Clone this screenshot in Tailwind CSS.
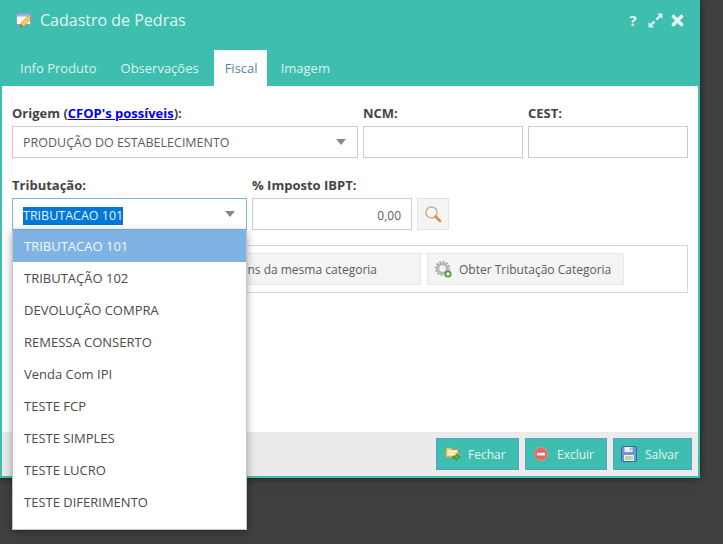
<!DOCTYPE html>
<html><head><meta charset="utf-8"><script src="https://cdn.jsdelivr.net/npm/@tailwindcss/browser@4"></script></head>
<body class="m-0 overflow-hidden">
<div class="relative w-[723px] h-[544px] overflow-hidden font-['Open_Sans',sans-serif] text-[12px] text-[#5c5c5c] bg-[#404040] bg-[repeating-linear-gradient(to_bottom,#404040_0,#404040_32px,#3b3b3b_32px,#3b3b3b_33px)]">
  <div class="relative flex flex-col w-[700px] h-[478px] bg-[#3dbeae] px-[2px] pb-[2px] shadow-[0_0_8px_rgba(0,0,0,0.55)]">
    <div class="h-[50px] shrink-0 flex items-center pl-[14px] pr-[14px] pb-[10px] text-[#e6f7f4]">
      <svg width="17" height="16" viewBox="0 0 17 16" class="shrink-0"><rect x=".5" y="1.5" width="14" height="11" fill="#f7f8fc" stroke="#8f9ac6"/><rect x="1" y="2" width="13" height="2.5" fill="#9fb0e6"/><path d="M4 14.5l1-3.5 7-7 3 3-7 7z" fill="#f7c95c" stroke="#d19a3a" stroke-width=".7"/><path d="M4 15l.8-3 2.2 2.2z" fill="#8a5a35"/></svg>
      <span class="ml-[7px] text-[16px] leading-[20px] text-[#e3f6f2]">Cadastro de Pedras</span>
      <div class="ml-auto flex items-center">
        <span class="font-bold text-[15px] leading-[14px] w-[10px] text-center mr-[10px]">?</span>
        <svg width="15" height="15" viewBox="0 0 15 15" fill="#d9f3ee" class="mr-[8px]"><path d="M9 .5h5.5V6l-1.9-1.9-3.3 3.3-1.7-1.7 3.3-3.3zM6 14.5H.5V9l1.9 1.9 3.3-3.3 1.7 1.7-3.3 3.3z"/></svg>
        <svg width="13" height="13" viewBox="0 0 13 13"><path d="M2.5 2.5l8 8M10.5 2.5l-8 8" stroke="#e3f6f2" stroke-width="3.6" stroke-linecap="round"/></svg>
      </div>
    </div>
    <div class="h-[36px] shrink-0 flex pl-[6px] text-[13px] text-[#d9f3ee]">
      <div class="px-[12px] pt-[9px]">Info Produto</div>
      <div class="pl-[12px] pr-[15px] pt-[9px]">Observações</div>
      <div class="px-[11px] pt-[9px] bg-white text-[#5b84ad] w-[53px]">Fiscal</div>
      <div class="px-[14px] pt-[9px]">Imagem</div>
    </div>
    <div class="flex-1 bg-white pt-[18px] px-[10px] pr-[10px]">
      <div class="flex gap-[5px]">
        <div class="w-[346px]">
          <div class="font-bold text-[13px] leading-[18px] h-[22px] text-[#444] whitespace-nowrap">Origem (<a class="text-[#0000ee] underline font-bold">CFOP's possíveis</a>):</div>
          <div class="h-[32px] border border-[#ccc] flex items-center pl-[10px] pr-[11px] pt-[3px] text-[12.5px]">PRODUÇÃO DO ESTABELECIMENTO<span class="ml-auto mb-[4px] w-0 h-0 border-x-[5px] border-x-transparent border-t-[6px] border-t-[#888]"></span></div>
        </div>
        <div class="w-[160px]">
          <div class="font-bold text-[13px] leading-[18px] h-[22px] text-[#444]">NCM:</div>
          <div class="h-[32px] border border-[#ccc]"></div>
        </div>
        <div class="w-[160px]">
          <div class="font-bold text-[13px] leading-[18px] h-[22px] text-[#444]">CEST:</div>
          <div class="h-[32px] border border-[#ccc]"></div>
        </div>
      </div>
      <div class="flex gap-[5px] mt-[18px]">
        <div class="w-[235px]">
          <div class="font-bold text-[13px] leading-[18px] h-[22px] text-[#444]">Tributação:</div>
          <div class="h-[32px] border border-[#7fb3e3] flex items-center pl-[10px] pr-[11px] pt-[3px] text-[12.5px]"><span class="bg-[#0078d7] text-[#e8f2fb] leading-[18px]">TRIBUTACAO 101</span><span class="ml-auto mb-[4px] w-0 h-0 border-x-[5px] border-x-transparent border-t-[6px] border-t-[#888]"></span></div>
        </div>
        <div class="w-[160px]">
          <div class="font-bold text-[13px] leading-[18px] h-[22px] text-[#444] whitespace-nowrap">% Imposto IBPT:</div>
          <div class="h-[32px] border border-[#ccc] flex items-center justify-end pr-[10px] pt-[3px]">0,00</div>
        </div>
        <div class="pt-[22px]">
          <div class="w-[32px] h-[32px] bg-[#f4f4f4] border border-[#e3e3e3] flex items-center justify-center">
            <svg width="18" height="18" viewBox="0 0 18 18"><circle cx="7.5" cy="7.5" r="5.5" fill="#f3f6f8" stroke="#dba86e" stroke-width="1.4"/><path d="M11.5 11.5l4.5 4.5" stroke="#d0935a" stroke-width="2.6" stroke-linecap="round"/></svg>
          </div>
        </div>
      </div>
      <div class="mt-[15px] h-[48px] border border-[#d8d8d8] flex items-center gap-[6px] pl-[6px] w-[676px]">
        <div class="h-[32px] w-[402px] bg-[#f4f4f4] border border-[#e8e8e8] flex items-center justify-end pr-[43px] pt-[2px] whitespace-nowrap">Copiar para itens da mesma categoria</div>
        <div class="h-[32px] w-[197px] bg-[#f4f4f4] border border-[#e8e8e8] flex items-center pl-[7px] whitespace-nowrap">
          <svg width="17" height="17" viewBox="0 0 17 17" class="mr-[7px] shrink-0"><circle cx="7.5" cy="7.5" r="4.6" fill="none" stroke="#b4b4b4" stroke-width="2.6"/><circle cx="7.5" cy="7.5" r="6.7" fill="none" stroke="#a8a8a8" stroke-width="1.8" stroke-dasharray="2 1.5"/><circle cx="13" cy="13" r="3.5" fill="#4d9a3a"/><path d="M11 13h4M13 11v4" stroke="#fff" stroke-width="1.3"/></svg>
          <span class="pt-[2px]">Obter Tributação Categoria</span>
        </div>
      </div>
    </div>
    <div class="h-[44px] shrink-0 bg-[#ebebeb] flex items-center justify-end gap-[6px] pr-[6px] text-[#e3f6f2]">
      <div class="w-[83px] h-[32px] bg-[#3dbeae] border border-[#5f9bd0] flex items-center pl-[8px]">
        <svg width="16" height="16" viewBox="0 0 16 16" class="mr-[7px] shrink-0"><path d="M1 2h5l1 1.5h6V11H1z" fill="#f6dc8c" stroke="#c59a3c"/><path d="M3 5.5h9M3 8h9" stroke="#fff"/><path d="M8 10h3V7.5l4 3.5-4 3.5V12.5H8z" fill="#6aa83e" stroke="#3f7a22" stroke-width=".7"/></svg>
        <span class="pt-[2px]">Fechar</span>
      </div>
      <div class="w-[82px] h-[32px] bg-[#3dbeae] border border-[#5f9bd0] flex items-center pl-[7px]">
        <svg width="16" height="16" viewBox="0 0 16 16" class="mr-[8px] shrink-0"><circle cx="8" cy="8" r="6.5" fill="#e8645c" stroke="#d9928c"/><rect x="4" y="6.8" width="8" height="2.6" fill="#fff"/></svg>
        <span class="pt-[2px]">Excluir</span>
      </div>
      <div class="w-[79px] h-[32px] bg-[#3dbeae] border border-[#5f9bd0] flex items-center pl-[7px]">
        <svg width="16" height="16" viewBox="0 0 16 16" class="mr-[8px] shrink-0"><rect x=".5" y=".5" width="15" height="15" rx="1" fill="#6f94d8" stroke="#3e62a8"/><rect x="3.5" y="1" width="8" height="5" fill="#eef3fb"/><rect x="9" y="1.5" width="1.2" height="3" fill="#6f94d8"/><rect x="3" y="9" width="10" height="6" fill="#eef3e8"/><path d="M4 11h8M4 13h8" stroke="#8cb56a" stroke-width="1.2"/></svg>
        <span class="pt-[2px]">Salvar</span>
      </div>
    </div>
  </div>
  <div class="absolute left-[12px] top-[230px] w-[235px] h-[300px] bg-white border border-t-0 border-[#c4c4c4] shadow-[0_2px_8px_rgba(0,0,0,0.35)] text-[13px] text-[#4a4a4a]">
    <div class="h-[32px] flex items-center px-[11px] pt-[1px] bg-[#7fb3e3] text-[#f2f7fc]">TRIBUTACAO 101</div>
    <div class="h-[32px] flex items-center px-[11px] pt-[1px]">TRIBUTAÇÃO 102</div>
    <div class="h-[32px] flex items-center px-[11px] pt-[1px]">DEVOLUÇÃO COMPRA</div>
    <div class="h-[32px] flex items-center px-[11px] pt-[1px]">REMESSA CONSERTO</div>
    <div class="h-[32px] flex items-center px-[11px] pt-[1px]">Venda Com IPI</div>
    <div class="h-[32px] flex items-center px-[11px] pt-[1px]">TESTE FCP</div>
    <div class="h-[32px] flex items-center px-[11px] pt-[1px]">TESTE SIMPLES</div>
    <div class="h-[32px] flex items-center px-[11px] pt-[1px]">TESTE LUCRO</div>
    <div class="h-[32px] flex items-center px-[11px] pt-[1px]">TESTE DIFERIMENTO</div>
  </div>
</div>
</body></html>
